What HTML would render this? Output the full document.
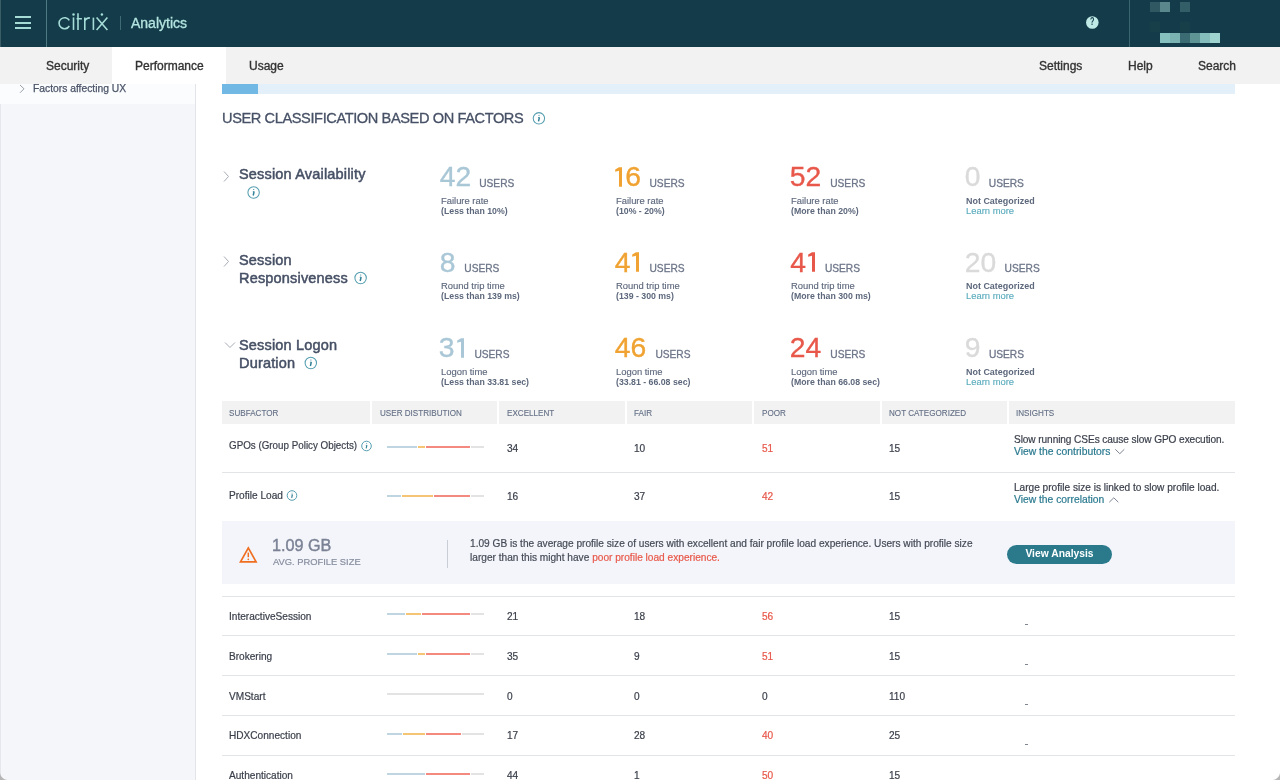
<!DOCTYPE html>
<html><head><meta charset="utf-8">
<style>
*{box-sizing:border-box;margin:0;padding:0}
html,body{width:1280px;height:780px;overflow:hidden;background:#fff;font-family:"Liberation Sans",sans-serif}
.a{position:absolute}
.t{position:absolute;white-space:nowrap;line-height:1}
#hdr{position:absolute;left:0;top:0;width:1280px;height:47px;background:#133b49}
#tabs{position:absolute;left:0;top:47px;width:1280px;height:37px;background:#f2f2f2}
.tab{position:absolute;top:0;height:37px;font-size:12px;color:#333;line-height:37px;-webkit-text-stroke:0.35px #333}
#side{position:absolute;left:0;top:84px;width:196px;height:696px;background:#f5f6fa;border-right:1px solid #e2e4e9}
.sec{font-size:14.5px;font-weight:400;color:#465065;line-height:18px;letter-spacing:0.18px;-webkit-text-stroke:0.5px #465065}
.big{font-size:28.3px;color:#a9c7d6;font-weight:400;-webkit-text-stroke:0.35px currentColor}
.users{font-size:10.2px;color:#6d7689;-webkit-text-stroke:0.3px #6d7689}
.sub1{font-size:10px;color:#5d687c;-webkit-text-stroke:0.15px #5d687c;transform-origin:0 0;transform:scale(0.94,0.93)}
.sub2{font-size:10px;font-weight:700;color:#5d687c;transform-origin:0 0;transform:scale(0.875,0.93)}
.th{position:absolute;top:401px;height:23px;background:#f2f2f2}
.thx{font-size:10px;color:#647086;top:408.7px;-webkit-text-stroke:0.15px currentColor;transform-origin:0 0;transform:scale(0.81,0.84)}
.td{font-size:10.1px;color:#3a3f4b;-webkit-text-stroke:0.2px currentColor}
.red{color:#e8584a}
.hl{position:absolute;left:222px;width:1013px;height:1px;background:#e3e4e7}
.bar{position:absolute;height:2px}
.link{color:#2b7a90}
</style></head><body>
<div id="wrap" style="position:absolute;left:0;top:0;width:1280px;height:780px;overflow:hidden;will-change:transform;background:#fff">
<div id="hdr">
  <div class="a" style="left:0;top:0;width:1px;height:47px;background:#3a5d66"></div>
  <!-- hamburger -->
  <div class="a" style="left:15px;top:16px;width:16px;height:2px;background:#a5dad5"></div>
  <div class="a" style="left:15px;top:22px;width:16px;height:2px;background:#a5dad5"></div>
  <div class="a" style="left:15px;top:27px;width:16px;height:2px;background:#a5dad5"></div>
  <div class="a" style="left:46px;top:0;width:1px;height:47px;background:#4d7a80"></div>
  <!-- citrix logo -->
  <svg class="a" style="left:55px;top:10px" width="60" height="24" viewBox="55 10 60 24">
    <g fill="none" stroke="#a6dcd7" stroke-width="1.6" stroke-linecap="butt">
      <path d="M69.3 20.4 A5.5 5.5 0 1 0 69.3 26.0"/>
      <path d="M73.5 17.4 V29.9"/>
      <path d="M78 13.2 V29.9 M76.6 18.7 H81.9"/>
      <path d="M84.8 29.9 V17.4 M84.8 21 Q85.8 17.9 89.9 17.9"/>
      <path d="M93.4 17.6 V29.9"/>
      <path d="M96.6 17.4 L107.4 29.9 M107.4 17.4 L96.6 29.9"/>
    </g>
    <circle cx="73.5" cy="14.6" r="1.25" fill="#a6dcd7"/>
    <circle cx="101.9" cy="14.6" r="1.25" fill="#a6dcd7"/>
  </svg>
  <div class="a" style="left:120px;top:16px;width:1px;height:14px;background:#3f6c74"></div>
  <div class="t" style="left:131px;top:15.7px;font-size:14px;color:#b3e5e0;-webkit-text-stroke:0.3px #b3e5e0">Analytics</div>
  <!-- help -->
  <svg class="a" style="left:1084px;top:14px" width="17" height="17" viewBox="0 0 17 17"><circle cx="8.3" cy="8.5" r="6.3" fill="#bfeae6"/></svg>
  <div class="t" style="left:1090.1px;top:17.4px;font-size:10px;font-weight:700;color:#133b49;transform-origin:0 0;transform:scale(0.72,1.02)">?</div>
  <div class="a" style="left:1129px;top:0;width:1px;height:47px;background:#3b6670"></div>
  <!-- pixel blocks -->
  <div class="a" style="left:1150px;top:2px;width:10px;height:10px;background:#2f5862"></div>
  <div class="a" style="left:1160px;top:2px;width:10px;height:10px;background:#5a878b"></div>
  <div class="a" style="left:1180px;top:2px;width:10px;height:10px;background:#345e67"></div>
  <div class="a" style="left:1150px;top:22px;width:10px;height:10px;background:#163f4a"></div>
  <div class="a" style="left:1180px;top:22px;width:10px;height:10px;background:#163f4a"></div>
  <div class="a" style="left:1160px;top:33px;width:10px;height:10px;background:#86c0bf"></div>
  <div class="a" style="left:1170px;top:33px;width:10px;height:10px;background:#7ab3b2"></div>
  <div class="a" style="left:1180px;top:33px;width:10px;height:10px;background:#3b6b73"></div>
  <div class="a" style="left:1190px;top:33px;width:10px;height:10px;background:#5f9495"></div>
  <div class="a" style="left:1200px;top:33px;width:10px;height:10px;background:#84bdbc"></div>
  <div class="a" style="left:1210px;top:33px;width:10px;height:10px;background:#9ed3d0"></div>
</div>
<div id="tabs">
  <div class="tab" style="left:0;width:112px;top:0.5px"><span style="position:absolute;left:46px">Security</span></div>
  <div class="a" style="left:112px;top:0;width:114px;height:37px;background:#fff"></div><div class="tab" style="left:135px;top:0.5px">Performance</div>
  <div class="tab" style="left:249px;top:0.5px">Usage</div>
  <div class="tab" style="left:1039px;top:0.5px">Settings</div>
  <div class="tab" style="left:1128px;top:0.5px">Help</div>
  <div class="tab" style="left:1198px;top:0.5px">Search</div>
</div>
<div id="side">
  <div class="a" style="left:0;top:0;width:1px;height:696px;background:#e6e7ec"></div>
  <div class="a" style="left:0;top:0;width:195px;height:20px;background:#fbfcfe"></div>
  <svg class="a" style="left:18px;top:0px" width="10" height="12" viewBox="0 0 10 12"><path d="M2 1 L6 4.8 L2 8.8" fill="none" stroke="#9aa0ab" stroke-width="1"/></svg>
  <div class="t" style="left:33px;top:0px;font-size:10.3px;color:#4b5468;line-height:10px;-webkit-text-stroke:0.25px #4b5468">Factors affecting UX</div>
</div>
<div id="main">
</div>

<!-- progress -->
<div class="a" style="left:222px;top:84px;width:1013px;height:10px;background:#e3f0f9"></div>
<div class="a" style="left:222px;top:84px;width:36px;height:10px;background:#72b8e4"></div>

<!-- title -->
<div class="t" style="left:222px;top:110.5px;font-size:14.6px;color:#475166;letter-spacing:-0.4px;-webkit-text-stroke:0.3px #475166">USER CLASSIFICATION BASED ON FACTORS</div>

<!-- section rows -->
<svg class="a" style="left:222px;top:170px" width="10" height="14" viewBox="0 0 10 14"><path d="M2 1.5 L6.5 6.5 L2 11.5" fill="none" stroke="#a7acb6" stroke-width="1"/></svg>
<div class="t sec" style="left:239px;top:165px">Session Availability</div>

<svg class="a" style="left:222px;top:255px" width="10" height="14" viewBox="0 0 10 14"><path d="M2 1.5 L6.5 6.5 L2 11.5" fill="none" stroke="#a7acb6" stroke-width="1"/></svg>
<div class="t sec" style="left:239px;top:252px;line-height:17.7px">Session<br>Responsiveness</div>

<svg class="a" style="left:222px;top:338px" width="14" height="12" viewBox="0 0 14 12"><path d="M3 4.5 L8 9.5 L13 4.5" fill="none" stroke="#a7acb6" stroke-width="1"/></svg>
<div class="t sec" style="left:239px;top:337px;line-height:17.7px">Session Logon<br>Duration</div>

<svg class="a" style="left:530px;top:110px" width="16" height="16" viewBox="0 0 16 16"><circle cx="8.90" cy="8.30" r="5.7" fill="none" stroke="#559eb0" stroke-width="1.05"/><ellipse cx="9.00" cy="5.30" rx="0.80" ry="0.45" fill="#2f8096"/><path d="M9.40 7.30 L8.50 11.30" stroke="#2f8096" stroke-width="1.45"/><path d="M8.00 7.60 L9.50 7.30" stroke="#2f8096" stroke-width="0.70"/></svg>
<svg class="a" style="left:245px;top:184px" width="16" height="16" viewBox="0 0 16 16"><circle cx="8.60" cy="8.50" r="5.7" fill="none" stroke="#559eb0" stroke-width="1.05"/><ellipse cx="8.70" cy="5.50" rx="0.80" ry="0.45" fill="#2f8096"/><path d="M9.10 7.50 L8.20 11.50" stroke="#2f8096" stroke-width="1.45"/><path d="M7.70 7.80 L9.20 7.50" stroke="#2f8096" stroke-width="0.70"/></svg>
<svg class="a" style="left:352px;top:270px" width="16" height="16" viewBox="0 0 16 16"><circle cx="8.60" cy="8.00" r="5.7" fill="none" stroke="#559eb0" stroke-width="1.05"/><ellipse cx="8.70" cy="5.00" rx="0.80" ry="0.45" fill="#2f8096"/><path d="M9.10 7.00 L8.20 11.00" stroke="#2f8096" stroke-width="1.45"/><path d="M7.70 7.30 L9.20 7.00" stroke="#2f8096" stroke-width="0.70"/></svg>
<svg class="a" style="left:302px;top:355px" width="16" height="16" viewBox="0 0 16 16"><circle cx="8.80" cy="8.00" r="5.7" fill="none" stroke="#559eb0" stroke-width="1.05"/><ellipse cx="8.90" cy="5.00" rx="0.80" ry="0.45" fill="#2f8096"/><path d="M9.30 7.00 L8.40 11.00" stroke="#2f8096" stroke-width="1.45"/><path d="M7.90 7.30 L9.40 7.00" stroke="#2f8096" stroke-width="0.70"/></svg>
<div class="t big" style="left:439.7px;top:162.4px;color:#a9c7d6">42</div>
<div class="t users" style="left:479.2px;top:178.6px">USERS</div>
<div class="t sub1" style="left:440.6px;top:196.9px">Failure rate</div>
<div class="t sub2" style="left:440.6px;top:206.7px">(Less than 10%)</div>
<svg class="a" style="left:615px;top:166.6px" width="8" height="21" viewBox="0 0 8 21"><path d="M4 0.2 H7 V19.7 H4 V3.7 L0.2 4.8 V2.6 Z" fill="#f0a332"/></svg>
<div class="t big" style="left:625.2px;top:162.4px;color:#f0a332">6</div>
<div class="t users" style="left:649.5px;top:178.6px">USERS</div>
<div class="t sub1" style="left:615.6px;top:196.9px">Failure rate</div>
<div class="t sub2" style="left:615.6px;top:206.7px">(10% - 20%)</div>
<div class="t big" style="left:789.7px;top:162.4px;color:#e8584a">52</div>
<div class="t users" style="left:830.2px;top:178.6px">USERS</div>
<div class="t sub1" style="left:790.6px;top:196.9px">Failure rate</div>
<div class="t sub2" style="left:790.6px;top:206.7px">(More than 20%)</div>
<div class="t big" style="left:964.7px;top:162.4px;color:#dadada">0</div>
<div class="t users" style="left:988.8px;top:178.6px">USERS</div>
<div class="t sub2" style="left:965.6px;top:196.9px;transform:scale(0.895,0.93)">Not Categorized</div>
<div class="t sub1" style="left:965.6px;top:206.7px;color:#5aabbd;-webkit-text-stroke-color:#5aabbd">Learn more</div>
<div class="t big" style="left:439.7px;top:247.8px;color:#a9c7d6">8</div>
<div class="t users" style="left:464.3px;top:264.0px">USERS</div>
<div class="t sub1" style="left:440.6px;top:282.3px">Round trip time</div>
<div class="t sub2" style="left:440.6px;top:292.1px">(Less than 139 ms)</div>
<div class="t big" style="left:614.8px;top:247.8px;color:#f0a332">4</div>
<svg class="a" style="left:631.8px;top:252.0px" width="8" height="21" viewBox="0 0 8 21"><path d="M4 0.2 H7 V19.7 H4 V3.7 L0.2 4.8 V2.6 Z" fill="#f0a332"/></svg>
<div class="t users" style="left:649.5px;top:264.0px">USERS</div>
<div class="t sub1" style="left:615.6px;top:282.3px">Round trip time</div>
<div class="t sub2" style="left:615.6px;top:292.1px">(139 - 300 ms)</div>
<div class="t big" style="left:790.3px;top:247.8px;color:#e8584a">4</div>
<svg class="a" style="left:807.5px;top:252.0px" width="8" height="21" viewBox="0 0 8 21"><path d="M4 0.2 H7 V19.7 H4 V3.7 L0.2 4.8 V2.6 Z" fill="#e8584a"/></svg>
<div class="t users" style="left:824.9px;top:264.0px">USERS</div>
<div class="t sub1" style="left:790.6px;top:282.3px">Round trip time</div>
<div class="t sub2" style="left:790.6px;top:292.1px">(More than 300 ms)</div>
<div class="t big" style="left:964.7px;top:247.8px;color:#dadada">20</div>
<div class="t users" style="left:1004.6px;top:264.0px">USERS</div>
<div class="t sub2" style="left:965.6px;top:282.3px;transform:scale(0.895,0.93)">Not Categorized</div>
<div class="t sub1" style="left:965.6px;top:292.1px;color:#5aabbd;-webkit-text-stroke-color:#5aabbd">Learn more</div>
<div class="t big" style="left:438.8px;top:333.4px;color:#a9c7d6">3</div>
<svg class="a" style="left:456.6px;top:337.6px" width="8" height="21" viewBox="0 0 8 21"><path d="M4 0.2 H7 V19.7 H4 V3.7 L0.2 4.8 V2.6 Z" fill="#a9c7d6"/></svg>
<div class="t users" style="left:474.4px;top:349.6px">USERS</div>
<div class="t sub1" style="left:440.6px;top:367.9px">Logon time</div>
<div class="t sub2" style="left:440.6px;top:377.7px">(Less than 33.81 sec)</div>
<div class="t big" style="left:614.7px;top:333.4px;color:#f0a332">46</div>
<div class="t users" style="left:655.4px;top:349.6px">USERS</div>
<div class="t sub1" style="left:615.6px;top:367.9px">Logon time</div>
<div class="t sub2" style="left:615.6px;top:377.7px">(33.81 - 66.08 sec)</div>
<div class="t big" style="left:789.7px;top:333.4px;color:#e8584a">24</div>
<div class="t users" style="left:830.3px;top:349.6px">USERS</div>
<div class="t sub1" style="left:790.6px;top:367.9px">Logon time</div>
<div class="t sub2" style="left:790.6px;top:377.7px">(More than 66.08 sec)</div>
<div class="t big" style="left:964.7px;top:333.4px;color:#dadada">9</div>
<div class="t users" style="left:988.9px;top:349.6px">USERS</div>
<div class="t sub2" style="left:965.6px;top:367.9px;transform:scale(0.895,0.93)">Not Categorized</div>
<div class="t sub1" style="left:965.6px;top:377.7px;color:#5aabbd;-webkit-text-stroke-color:#5aabbd">Learn more</div>

<!-- table header -->
<div class="th" style="left:222px;width:148px"></div>
<div class="th" style="left:372px;width:125px"></div>
<div class="th" style="left:499px;width:126px"></div>
<div class="th" style="left:627px;width:125px"></div>
<div class="th" style="left:754px;width:126px"></div>
<div class="th" style="left:882px;width:125px"></div>
<div class="th" style="left:1009px;width:226px"></div>
<div class="t thx" style="left:229px">SUBFACTOR</div>
<div class="t thx" style="left:380px">USER DISTRIBUTION</div>
<div class="t thx" style="left:507px">EXCELLENT</div>
<div class="t thx" style="left:634px">FAIR</div>
<div class="t thx" style="left:762px">POOR</div>
<div class="t thx" style="left:889px">NOT CATEGORIZED</div>
<div class="t thx" style="left:1016px">INSIGHTS</div>

<div class="t td" style="left:229px;top:441px;transform-origin:0 0;transform:scale(0.972,1)">GPOs (Group Policy Objects)</div>
<svg class="a" style="left:358px;top:438px" width="16" height="16" viewBox="0 0 16 16"><circle cx="8.50" cy="8.00" r="4.8" fill="none" stroke="#559eb0" stroke-width="1.0"/><ellipse cx="8.58" cy="5.60" rx="0.64" ry="0.36" fill="#2f8096"/><path d="M8.90 7.20 L8.18 10.40" stroke="#2f8096" stroke-width="1.16"/><path d="M7.78 7.44 L8.98 7.20" stroke="#2f8096" stroke-width="0.56"/></svg>
<div class="bar" style="left:387px;top:445.5px;width:30px;background:#bfd5e2"></div>
<div class="bar" style="left:418px;top:445.5px;width:7px;background:#f6c475"></div>
<div class="bar" style="left:426px;top:445.5px;width:44px;background:#f48a7f"></div>
<div class="bar" style="left:471px;top:445.5px;width:13px;background:#e3e3e3"></div>
<div class="t td" style="left:507px;top:443.7px">34</div>
<div class="t td" style="left:634px;top:443.7px">10</div>
<div class="t td red" style="left:762px;top:443.7px">51</div>
<div class="t td" style="left:889px;top:443.7px">15</div>
<div class="t td" style="left:1014px;top:434.5px;letter-spacing:-0.08px">Slow running CSEs cause slow GPO execution.</div>
<div class="t td link" style="left:1014px;top:446.5px;font-size:10.35px">View the contributors</div>
<svg class="a" style="left:1114px;top:447px" width="12" height="10" viewBox="0 0 12 10"><path d="M1.3 2.3 L5.8 6.7 L10.3 2.3" fill="none" stroke="#7c8393" stroke-width="1"/></svg>
<div class="hl" style="top:472px"></div>
<div class="t td" style="left:229px;top:490.5px">Profile Load</div>
<svg class="a" style="left:284px;top:487px" width="16" height="16" viewBox="0 0 16 16"><circle cx="8.00" cy="8.50" r="4.8" fill="none" stroke="#559eb0" stroke-width="1.0"/><ellipse cx="8.08" cy="6.10" rx="0.64" ry="0.36" fill="#2f8096"/><path d="M8.40 7.70 L7.68 10.90" stroke="#2f8096" stroke-width="1.16"/><path d="M7.28 7.94 L8.48 7.70" stroke="#2f8096" stroke-width="0.56"/></svg>
<div class="bar" style="left:387px;top:494.5px;width:14px;background:#bfd5e2"></div>
<div class="bar" style="left:402px;top:494.5px;width:31px;background:#f6c475"></div>
<div class="bar" style="left:434px;top:494.5px;width:36px;background:#f48a7f"></div>
<div class="bar" style="left:471px;top:494.5px;width:13px;background:#e3e3e3"></div>
<div class="t td" style="left:507px;top:491.5px">16</div>
<div class="t td" style="left:634px;top:491.5px">37</div>
<div class="t td red" style="left:762px;top:491.5px">42</div>
<div class="t td" style="left:889px;top:491.5px">15</div>
<div class="t td" style="left:1014px;top:483px">Large profile size is linked to slow profile load.</div>
<div class="t td link" style="left:1014px;top:495px;font-size:10.3px">View the correlation</div>
<svg class="a" style="left:1108px;top:495px" width="12" height="10" viewBox="0 0 12 10"><path d="M1.3 7.2 L5.8 2.8 L10.3 7.2" fill="none" stroke="#7c8393" stroke-width="1"/></svg>
<div class="a" style="left:222px;top:521px;width:1013px;height:63px;background:#f4f5fa"></div>
<svg class="a" style="left:237px;top:543px" width="22" height="22" viewBox="0 0 22 22"><path d="M11.3 4.9 L19.1 18.9 H3.5 Z" fill="none" stroke="#ef6e1f" stroke-width="1.7" stroke-linejoin="miter"/><path d="M11.3 9.6 V14.2" stroke="#ef6e1f" stroke-width="1.5"/><circle cx="11.3" cy="16.3" r="0.85" fill="#ef6e1f"/></svg>
<div class="t" style="left:272px;top:537px;font-size:16.2px;color:#7a8295;-webkit-text-stroke:0.4px #7a8295">1.09 GB</div>
<div class="t" style="left:273px;top:557.3px;font-size:10px;color:#868d9e;-webkit-text-stroke:0.2px currentColor;transform-origin:0 0;transform:scale(0.935,0.97)">AVG. PROFILE SIZE</div>
<div class="a" style="left:447px;top:540px;width:1px;height:28px;background:#c9cdd5"></div>
<div class="t td" style="left:470px;top:537.3px;line-height:14px;color:#454b57;font-size:10.15px">1.09 GB is the average profile size of users with excellent and fair profile load experience. Users with profile size<br>larger than this might have <span class="red">poor profile load experience.</span></div>
<div class="a" style="left:1007px;top:545px;width:105px;height:19px;border-radius:10px;background:#2a7a8c"></div>
<div class="t" style="left:1007px;top:549px;width:105px;text-align:center;font-size:10.3px;font-weight:700;color:#fff">View Analysis</div>
<div class="hl" style="top:596px"></div>
<div class="t td" style="left:229px;top:611.5px">InteractiveSession</div>
<div class="bar" style="left:387px;top:613.4px;width:18px;background:#bfd5e2"></div>
<div class="bar" style="left:406px;top:613.4px;width:15px;background:#f6c475"></div>
<div class="bar" style="left:422px;top:613.4px;width:48px;background:#f48a7f"></div>
<div class="bar" style="left:471px;top:613.4px;width:13px;background:#e3e3e3"></div>
<div class="t td" style="left:507px;top:611.5px">21</div>
<div class="t td" style="left:634px;top:611.5px">18</div>
<div class="t td red" style="left:762px;top:611.5px">56</div>
<div class="t td" style="left:889px;top:611.5px">15</div>
<div class="a" style="left:1025px;top:624px;width:3px;height:1px;background:#7f8592"></div>
<div class="hl" style="top:635px"></div>
<div class="t td" style="left:229px;top:651.5px">Brokering</div>
<div class="bar" style="left:387px;top:653.4px;width:30px;background:#bfd5e2"></div>
<div class="bar" style="left:418px;top:653.4px;width:7px;background:#f6c475"></div>
<div class="bar" style="left:426px;top:653.4px;width:44px;background:#f48a7f"></div>
<div class="bar" style="left:471px;top:653.4px;width:13px;background:#e3e3e3"></div>
<div class="t td" style="left:507px;top:651.5px">35</div>
<div class="t td" style="left:634px;top:651.5px">9</div>
<div class="t td red" style="left:762px;top:651.5px">51</div>
<div class="t td" style="left:889px;top:651.5px">15</div>
<div class="a" style="left:1025px;top:664px;width:3px;height:1px;background:#7f8592"></div>
<div class="hl" style="top:675px"></div>
<div class="t td" style="left:229px;top:691.5px">VMStart</div>
<div class="bar" style="left:387px;top:693.4px;width:97px;background:#e3e3e3"></div>
<div class="t td" style="left:507px;top:691.5px">0</div>
<div class="t td" style="left:634px;top:691.5px">0</div>
<div class="t td" style="left:762px;top:691.5px">0</div>
<div class="t td" style="left:889px;top:691.5px">110</div>
<div class="a" style="left:1025px;top:704px;width:3px;height:1px;background:#7f8592"></div>
<div class="hl" style="top:715px"></div>
<div class="t td" style="left:229px;top:731.0px">HDXConnection</div>
<div class="bar" style="left:387px;top:732.9px;width:15px;background:#bfd5e2"></div>
<div class="bar" style="left:403px;top:732.9px;width:22px;background:#f6c475"></div>
<div class="bar" style="left:426px;top:732.9px;width:35px;background:#f48a7f"></div>
<div class="bar" style="left:462px;top:732.9px;width:22px;background:#e3e3e3"></div>
<div class="t td" style="left:507px;top:731.0px">17</div>
<div class="t td" style="left:634px;top:731.0px">28</div>
<div class="t td red" style="left:762px;top:731.0px">40</div>
<div class="t td" style="left:889px;top:731.0px">25</div>
<div class="a" style="left:1025px;top:743.5px;width:3px;height:1px;background:#7f8592"></div>
<div class="hl" style="top:755px"></div>
<div class="t td" style="left:229px;top:771.0px">Authentication</div>
<div class="bar" style="left:387px;top:772.9px;width:38px;background:#bfd5e2"></div>
<div class="bar" style="left:426px;top:772.9px;width:44px;background:#f48a7f"></div>
<div class="bar" style="left:471px;top:772.9px;width:13px;background:#e3e3e3"></div>
<div class="t td" style="left:507px;top:771.0px">44</div>
<div class="t td" style="left:634px;top:771.0px">1</div>
<div class="t td red" style="left:762px;top:771.0px">50</div>
<div class="t td" style="left:889px;top:771.0px">15</div>

<div class="a" style="left:0;top:772px;width:8px;height:8px;background:radial-gradient(circle at 8px 0,rgba(0,0,0,0) 7.5px,#b5b5b5 8.5px)"></div>
<div class="a" style="left:1272px;top:772px;width:8px;height:8px;background:radial-gradient(circle at 0 0,rgba(0,0,0,0) 7.5px,#b5b5b5 8.5px)"></div>
</div>
</body></html>
